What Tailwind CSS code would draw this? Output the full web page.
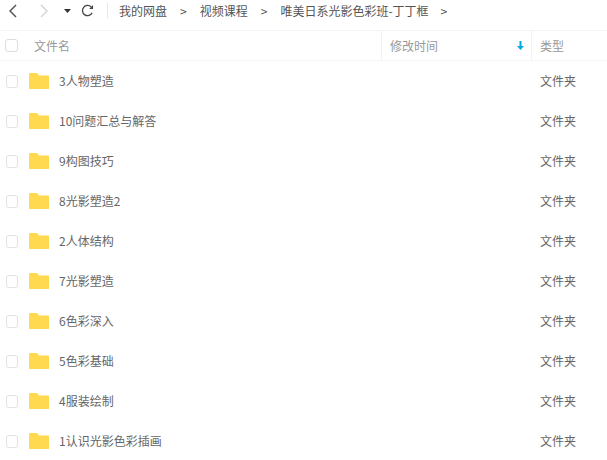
<!DOCTYPE html>
<html lang="zh">
<head>
  <meta charset="UTF-8" />
  <title>文件列表</title>
  <script src="https://cdn.jsdelivr.net/npm/@tailwindcss/browser@4"></script>
</head>
<body class="w-[607px] h-[460px] overflow-hidden bg-white text-[12px] text-[#666] font-['Noto_Sans_CJK_SC','Liberation_Sans',sans-serif]">
  <nav class="h-[30px] pb-[9px] flex items-center text-[#555]">
    <svg class="ml-[9px] w-[8px] h-[14px]" viewBox="0 0 8 14" fill="none" stroke="#555" stroke-width="1.5"><path d="M7 1 1 7l6 6"/></svg>
    <svg class="ml-[23px] w-[8px] h-[14px]" viewBox="0 0 8 14" fill="none" stroke="#d5d5d5" stroke-width="1.5"><path d="M1 1l6 6-6 6"/></svg>
    <svg class="ml-[16px] w-[7px] h-[4px]" viewBox="0 0 7 4" fill="#333"><path d="M0 0h7L3.500 4z"/></svg>
    <svg class="ml-[10px] w-[13px] h-[13px]" viewBox="0 0 14 14" fill="none" stroke="#444" stroke-width="1.4"><path d="M12 9.500A5.500 5.500 0 1 1 11 3.200"/><path d="M13 1.200v4.200H8.800z" fill="#444" stroke="none"/></svg>
    <span class="ml-[13px] w-px h-[15px] bg-[#e8e8e8]"></span>
    <span class="ml-[11px]">我的网盘</span>
    <span class="ml-[13px]">&gt;</span>
    <span class="ml-[13px]">视频课程</span>
    <span class="ml-[13px]">&gt;</span>
    <span class="ml-[13px]">唯美日系光影色彩班-丁丁框</span>
    <span class="ml-[12px]">&gt;</span>
  </nav>
  <div class="h-[31px] flex items-center border-y border-[#f4f4f4] text-[#999]">
    <span class="ml-[5px] w-[13px] h-[13px] rounded-[3px] border border-[#ddd]"></span>
    <span class="ml-[16px] w-[347px]">文件名</span>
    <span class="w-px h-full bg-[#f2f2f2]"></span>
    <span class="ml-[8px] w-[141px] flex items-center justify-between pr-[7px]">修改时间
      <svg class="w-[7px] h-[9px]" viewBox="0 0 7 9" fill="#06a7e2"><path d="M2.500 0h2v5H7L3.500 9 0 5h2.500z"/></svg>
    </span>
    <span class="w-px h-full bg-[#f2f2f2]"></span>
    <span class="ml-[8px]">类型</span>
  </div>
  <ul>
    <li class="h-[40px] flex items-center"><span class="ml-[6px] w-[12px] h-[13px] rounded-[3px] border border-[#e3e3e3]"></span><svg class="ml-[11px] w-[20px] h-[16px] -mt-[1px]" viewBox="0 0 20 16"><path d="M0 1a1 1 0 0 1 1-1h7l2 2.500h9.500a.5.5 0 0 1 .5.5v12.500a.5.5 0 0 1-.5.5H.5a.5.5 0 0 1-.5-.5z" fill="#ffd94f"/></svg><span class="ml-[10px] w-[481px]">3人物塑造</span><span>文件夹</span></li>
    <li class="h-[40px] flex items-center"><span class="ml-[6px] w-[12px] h-[13px] rounded-[3px] border border-[#e3e3e3]"></span><svg class="ml-[11px] w-[20px] h-[16px] -mt-[1px]" viewBox="0 0 20 16"><path d="M0 1a1 1 0 0 1 1-1h7l2 2.500h9.500a.5.5 0 0 1 .5.5v12.500a.5.5 0 0 1-.5.5H.5a.5.5 0 0 1-.5-.5z" fill="#ffd94f"/></svg><span class="ml-[10px] w-[481px]">10问题汇总与解答</span><span>文件夹</span></li>
    <li class="h-[40px] flex items-center"><span class="ml-[6px] w-[12px] h-[13px] rounded-[3px] border border-[#e3e3e3]"></span><svg class="ml-[11px] w-[20px] h-[16px] -mt-[1px]" viewBox="0 0 20 16"><path d="M0 1a1 1 0 0 1 1-1h7l2 2.500h9.500a.5.5 0 0 1 .5.5v12.500a.5.5 0 0 1-.5.5H.5a.5.5 0 0 1-.5-.5z" fill="#ffd94f"/></svg><span class="ml-[10px] w-[481px]">9构图技巧</span><span>文件夹</span></li>
    <li class="h-[40px] flex items-center"><span class="ml-[6px] w-[12px] h-[13px] rounded-[3px] border border-[#e3e3e3]"></span><svg class="ml-[11px] w-[20px] h-[16px] -mt-[1px]" viewBox="0 0 20 16"><path d="M0 1a1 1 0 0 1 1-1h7l2 2.500h9.500a.5.5 0 0 1 .5.5v12.500a.5.5 0 0 1-.5.5H.5a.5.5 0 0 1-.5-.5z" fill="#ffd94f"/></svg><span class="ml-[10px] w-[481px]">8光影塑造2</span><span>文件夹</span></li>
    <li class="h-[40px] flex items-center"><span class="ml-[6px] w-[12px] h-[13px] rounded-[3px] border border-[#e3e3e3]"></span><svg class="ml-[11px] w-[20px] h-[16px] -mt-[1px]" viewBox="0 0 20 16"><path d="M0 1a1 1 0 0 1 1-1h7l2 2.500h9.500a.5.5 0 0 1 .5.5v12.500a.5.5 0 0 1-.5.5H.5a.5.5 0 0 1-.5-.5z" fill="#ffd94f"/></svg><span class="ml-[10px] w-[481px]">2人体结构</span><span>文件夹</span></li>
    <li class="h-[40px] flex items-center"><span class="ml-[6px] w-[12px] h-[13px] rounded-[3px] border border-[#e3e3e3]"></span><svg class="ml-[11px] w-[20px] h-[16px] -mt-[1px]" viewBox="0 0 20 16"><path d="M0 1a1 1 0 0 1 1-1h7l2 2.500h9.500a.5.5 0 0 1 .5.5v12.500a.5.5 0 0 1-.5.5H.5a.5.5 0 0 1-.5-.5z" fill="#ffd94f"/></svg><span class="ml-[10px] w-[481px]">7光影塑造</span><span>文件夹</span></li>
    <li class="h-[40px] flex items-center"><span class="ml-[6px] w-[12px] h-[13px] rounded-[3px] border border-[#e3e3e3]"></span><svg class="ml-[11px] w-[20px] h-[16px] -mt-[1px]" viewBox="0 0 20 16"><path d="M0 1a1 1 0 0 1 1-1h7l2 2.500h9.500a.5.5 0 0 1 .5.5v12.500a.5.5 0 0 1-.5.5H.5a.5.5 0 0 1-.5-.5z" fill="#ffd94f"/></svg><span class="ml-[10px] w-[481px]">6色彩深入</span><span>文件夹</span></li>
    <li class="h-[40px] flex items-center"><span class="ml-[6px] w-[12px] h-[13px] rounded-[3px] border border-[#e3e3e3]"></span><svg class="ml-[11px] w-[20px] h-[16px] -mt-[1px]" viewBox="0 0 20 16"><path d="M0 1a1 1 0 0 1 1-1h7l2 2.500h9.500a.5.5 0 0 1 .5.5v12.500a.5.5 0 0 1-.5.5H.5a.5.5 0 0 1-.5-.5z" fill="#ffd94f"/></svg><span class="ml-[10px] w-[481px]">5色彩基础</span><span>文件夹</span></li>
    <li class="h-[40px] flex items-center"><span class="ml-[6px] w-[12px] h-[13px] rounded-[3px] border border-[#e3e3e3]"></span><svg class="ml-[11px] w-[20px] h-[16px] -mt-[1px]" viewBox="0 0 20 16"><path d="M0 1a1 1 0 0 1 1-1h7l2 2.500h9.500a.5.5 0 0 1 .5.5v12.500a.5.5 0 0 1-.5.5H.5a.5.5 0 0 1-.5-.5z" fill="#ffd94f"/></svg><span class="ml-[10px] w-[481px]">4服装绘制</span><span>文件夹</span></li>
    <li class="h-[40px] flex items-center"><span class="ml-[6px] w-[12px] h-[13px] rounded-[3px] border border-[#e3e3e3]"></span><svg class="ml-[11px] w-[20px] h-[16px] -mt-[1px]" viewBox="0 0 20 16"><path d="M0 1a1 1 0 0 1 1-1h7l2 2.500h9.500a.5.5 0 0 1 .5.5v12.500a.5.5 0 0 1-.5.5H.5a.5.5 0 0 1-.5-.5z" fill="#ffd94f"/></svg><span class="ml-[10px] w-[481px]">1认识光影色彩插画</span><span>文件夹</span></li>
  </ul>
</body>
</html>
